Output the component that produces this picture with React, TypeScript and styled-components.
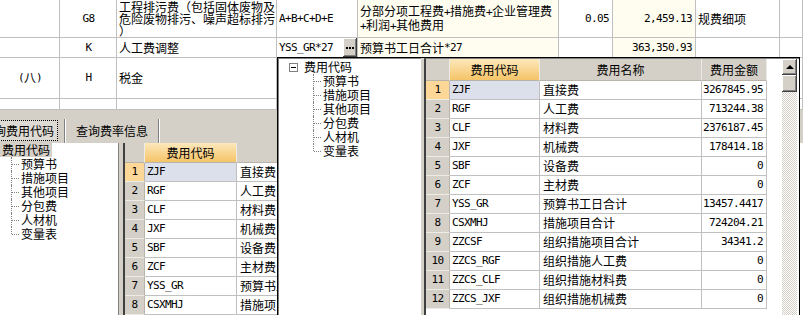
import React from "react";
import styled, { createGlobalStyle } from "styled-components";

const GRAY = "#D4D0C8";
const LINE = "#C0C0C0";
const CREAM = "#FFFDF0";
const CJK = `"Noto Sans CJK SC", "Noto Sans", sans-serif`;
const MONO = `"DejaVu Sans Mono", "Liberation Mono", monospace`;

const Global = createGlobalStyle`
  html, body { margin: 0; padding: 0; background: #fff; }
`;

const Screen = styled.div`
  position: relative;
  width: 803px;
  height: 315px;
  overflow: hidden;
  background: #fff;
  color: #000;
  font-family: ${CJK};
  font-size: 12px;
  line-height: 12px;
  display: flex;
  flex-direction: column;
`;

const Latin = styled.span`
  font-family: ${MONO};
  font-size: 11px;
  letter-spacing: -0.62px;
`;

function Txt({ s }: { s: string }) {
  const parts = s.match(/[\x00-\x7F]+|[^\x00-\x7F]+/g) || [];
  return (
    <>
      {parts.map((p, i) =>
        /^[\x00-\x7F]/.test(p) ? <Latin key={i}>{p}</Latin> : <React.Fragment key={i}>{p}</React.Fragment>
      )}
    </>
  );
}

/* ---------- main (background) table ---------- */

const MainTable = styled.div`
  flex: none;
  height: 110px;
  overflow: hidden;
  display: grid;
  grid-template-columns: 60px 57px 160px 81px 201px 54px 83px 84px 1fr;
  grid-template-rows: 38px 20px 41px 1fr;
`;

type Align = "left" | "center" | "right";

const Cell = styled.div<{ $align?: Align; $bg?: string }>`
  box-sizing: border-box;
  border-right: 1px solid ${LINE};
  border-bottom: 1px solid ${LINE};
  background: ${(p) => p.$bg || "#fff"};
  display: flex;
  align-items: center;
  justify-content: ${(p) =>
    p.$align === "center" ? "center" : p.$align === "right" ? "flex-end" : "flex-start"};
  padding: ${(p) => (p.$align === "right" ? "0 3px 0 2px" : "0 1px 0 2px")};
  overflow: hidden;
  white-space: nowrap;
`;

const EditCell = styled(Cell)`
  justify-content: space-between;
  padding-right: 0;
  align-items: stretch;
`;

const EditText = styled.span`
  display: flex;
  align-items: center;
`;

const Lines = styled.div`
  display: flex;
  flex-direction: column;
  line-height: 12px;
`;

const raised = `
  background: ${GRAY};
  box-shadow: inset -1px -1px #404040, inset 1px 1px #fff, inset -2px -2px #808080, inset 2px 2px ${GRAY};
`;

const EllipsisButton = styled.div`
  ${raised}
  width: 14px;
  display: flex;
  align-items: center;
  justify-content: center;
`;

/* ---------- lower panel ---------- */

const Lower = styled.div`
  flex: 1;
  min-height: 0;
  display: flex;
  flex-direction: column;
  background: ${GRAY};
`;

const TabBar = styled.div`
  flex: none;
  height: 33px;
  box-sizing: border-box;
  padding-top: 10px;
  display: flex;
  align-items: flex-start;
  margin-left: -22px;
`;

const Tab = styled.div<{ $active?: boolean }>`
  height: 21px;
  box-sizing: border-box;
  padding: 0 4px;
  display: flex;
  align-items: center;
  outline: ${(p) => (p.$active ? "1px dotted #000" : "none")};
  outline-offset: -1px;
  background: ${(p) => (p.$active ? "#DEDBD4" : "transparent")};
`;

const TabSep = styled.div`
  width: 0;
  height: 24px;
  margin: -1px 6px 0;
  border-left: 1px solid #808080;
  border-right: 1px solid #fff;
`;

const LowerBody = styled.div`
  flex: 1;
  min-height: 0;
  display: flex;
`;

const LowerTreePane = styled.div`
  width: 119px;
  flex: none;
  box-sizing: border-box;
  background: #fff;
  border-right: 1px solid #808080;
  overflow: hidden;
`;

const LowerGridPane = styled.div`
  margin-left: 4px;
  flex: 1;
  border-left: 2px solid #404040;
  background: #fff;
  overflow: hidden;
`;

/* ---------- tree ---------- */

const Tree = styled.div<{ $shift?: number }>`
  margin-left: ${(p) => -(p.$shift || 0)}px;
  white-space: nowrap;
`;

const RootRow = styled.div`
  height: 14px;
  display: flex;
  align-items: center;
  padding-left: 10px;
`;

const Expander = styled.div`
  position: relative;
  width: 9px;
  height: 9px;
  box-sizing: border-box;
  border: 1px solid #808080;
  background: #fff;
  &::after {
    content: "";
    position: absolute;
    left: 1px;
    top: 3px;
    width: 5px;
    height: 1px;
    background: #000;
  }
`;

const RootLabel = styled.span<{ $sel?: boolean }>`
  margin-left: 4px;
  padding: 1px 2px;
  background: ${(p) => (p.$sel ? GRAY : "transparent")};
`;

const Child = styled.div<{ $last?: boolean }>`
  position: relative;
  height: 14px;
  display: flex;
  align-items: center;
  padding-left: 44px;
  &::before {
    content: "";
    position: absolute;
    left: 34px;
    top: 0;
    height: ${(p) => (p.$last ? "7px" : "14px")};
    border-left: 1px dotted #808080;
  }
  &::after {
    content: "";
    position: absolute;
    left: 35px;
    top: 7px;
    width: 7px;
    border-top: 1px dotted #808080;
  }
`;

const treeChildren = ["预算书", "措施项目", "其他项目", "分包费", "人材机", "变量表"];

function CodeTree({ shift, selected }: { shift?: number; selected?: boolean }) {
  return (
    <Tree $shift={shift}>
      <RootRow>
        <Expander />
        <RootLabel $sel={selected}>费用代码</RootLabel>
      </RootRow>
      {treeChildren.map((c, i) => (
        <Child key={c} $last={i === treeChildren.length - 1}>
          {c}
        </Child>
      ))}
    </Tree>
  );
}

/* ---------- data grid ---------- */

const GridRow = styled.div<{ $cols: string; $h: number }>`
  display: grid;
  grid-template-columns: ${(p) => p.$cols};
  height: ${(p) => p.$h}px;
`;

const HeadCell = styled.div<{ $hot?: boolean }>`
  box-sizing: border-box;
  display: flex;
  align-items: center;
  justify-content: center;
  background: ${(p) => (p.$hot ? "linear-gradient(#FCE8BC, #F5C467)" : GRAY)};
  border-right: 1px solid #EDEBE6;
  border-bottom: 1px solid #B8B4AC;
  white-space: nowrap;
  overflow: hidden;
`;

const NumCell = styled.div<{ $hot?: boolean }>`
  box-sizing: border-box;
  display: flex;
  align-items: center;
  justify-content: center;
  background: ${(p) => (p.$hot ? "#FDD797" : GRAY)};
  border-right: 1px solid #B8B4AC;
  border-bottom: 1px solid #EDEBE6;
`;

const DataCell = styled.div<{ $right?: boolean; $sel?: boolean }>`
  box-sizing: border-box;
  display: flex;
  align-items: center;
  justify-content: ${(p) => (p.$right ? "flex-end" : "flex-start")};
  padding: ${(p) => (p.$right ? "0 3px 0 0" : "0 0 0 2px")};
  background: ${(p) => (p.$sel ? "#DCE0EB" : "#fff")};
  border-right: 1px solid ${LINE};
  border-bottom: 1px solid ${LINE};
  white-space: nowrap;
  overflow: hidden;
`;

const NameCell = styled(DataCell)`
  padding-left: 3px;
`;

const feeRows: [string, string, string][] = [
  ["ZJF", "直接费", "3267845.95"],
  ["RGF", "人工费", "713244.38"],
  ["CLF", "材料费", "2376187.45"],
  ["JXF", "机械费", "178414.18"],
  ["SBF", "设备费", "0"],
  ["ZCF", "主材费", "0"],
  ["YSS_GR", "预算书工日合计", "13457.4417"],
  ["CSXMHJ", "措施项目合计", "724204.21"],
  ["ZZCSF", "组织措施项目合计", "34341.2"],
  ["ZZCS_RGF", "组织措施人工费", "0"],
  ["ZZCS_CLF", "组织措施材料费", "0"],
  ["ZZCS_JXF", "组织措施机械费", "0"],
];

function FeeGrid({
  cols,
  headH,
  count,
  withAmount = true,
}: {
  cols: string;
  headH: number;
  count: number;
  withAmount?: boolean;
}) {
  return (
    <div>
      <GridRow $cols={cols} $h={headH}>
        <HeadCell />
        <HeadCell $hot>费用代码</HeadCell>
        <HeadCell>费用名称</HeadCell>
        {withAmount && <HeadCell>费用金额</HeadCell>}
      </GridRow>
      {feeRows.slice(0, count).map(([code, name, amt], i) => (
        <GridRow key={code} $cols={cols} $h={19}>
          <NumCell $hot={i === 0}>
            <Txt s={String(i + 1)} />
          </NumCell>
          <DataCell $sel={i === 0}>
            <Txt s={code} />
          </DataCell>
          <NameCell>{name}</NameCell>
          {withAmount && (
            <DataCell $right>
              <Txt s={amt} />
            </DataCell>
          )}
        </GridRow>
      ))}
    </div>
  );
}

/* ---------- popup ---------- */

const Popup = styled.div`
  position: absolute;
  left: 277px;
  top: 57px;
  width: 523px;
  height: 270px;
  box-sizing: border-box;
  border: 1px solid #000;
  background: ${GRAY};
  display: flex;
`;

const PopTreePane = styled.div`
  width: 143px;
  flex: none;
  box-sizing: border-box;
  border-left: 1px solid #808080;
  border-top: 1px solid #808080;
  background: #fff;
  padding-top: 1px;
`;

const PopGridPane = styled.div`
  margin-left: 3px;
  flex: 1;
  display: flex;
  background: #fff;
  border-left: 2px solid #404040;
  border-top: 1px solid #808080;
`;

const GridSlot = styled.div`
  width: 341px;
  flex: none;
`;

const Filler = styled.div`
  flex: 1;
`;

const ScrollBar = styled.div`
  width: 15px;
  margin-right: 2px;
  display: flex;
  flex-direction: column;
  background: repeating-conic-gradient(${GRAY} 0 25%, #fff 0 50%) 0 0 / 2px 2px;
`;

const ScrollBtn = styled.div<{ $h: number }>`
  ${raised}
  height: ${(p) => p.$h}px;
  flex: none;
  display: flex;
  align-items: center;
  justify-content: center;
`;

const UpArrow = styled.div`
  width: 0;
  height: 0;
  border-left: 4px solid transparent;
  border-right: 4px solid transparent;
  border-bottom: 4px solid #000;
  margin-top: -1px;
`;

export default function App() {
  return (
    <>
      <Global />
      <Screen>
        <MainTable>
          {/* row 1 */}
          <Cell />
          <Cell $align="center">
            <Txt s="G8" />
          </Cell>
          <Cell>
            <Lines>
              <span>工程排污费（包括固体废物及</span>
              <span>危险废物排污、噪声超标排污</span>
              <span>）</span>
            </Lines>
          </Cell>
          <Cell>
            <Txt s="A+B+C+D+E" />
          </Cell>
          <Cell $bg={CREAM}>
            <Lines>
              <span>
                <Txt s="分部分项工程费+措施费+企业管理费" />
              </span>
              <span>
                <Txt s="+利润+其他费用" />
              </span>
            </Lines>
          </Cell>
          <Cell $align="right">
            <Txt s="0.05" />
          </Cell>
          <Cell $align="right" $bg={CREAM}>
            <Txt s="2,459.13" />
          </Cell>
          <Cell>规费细项</Cell>
          <Cell />

          {/* row 2 */}
          <Cell />
          <Cell $align="center">
            <Txt s="K" />
          </Cell>
          <Cell>人工费调整</Cell>
          <EditCell>
            <EditText>
              <Txt s="YSS_GR*27" />
            </EditText>
            <EllipsisButton>
              <svg width="8" height="2" viewBox="0 0 8 2">
                <rect x="0" y="0" width="2" height="2" fill="#000" />
                <rect x="3" y="0" width="2" height="2" fill="#000" />
                <rect x="6" y="0" width="2" height="2" fill="#000" />
              </svg>
            </EllipsisButton>
          </EditCell>
          <Cell $bg={CREAM}>
            <Txt s="预算书工日合计*27" />
          </Cell>
          <Cell />
          <Cell $align="right" $bg={CREAM}>
            <Txt s="363,350.93" />
          </Cell>
          <Cell />
          <Cell />

          {/* row 3 */}
          <Cell $align="center">
            <Txt s="(" />八<Txt s=")" />
          </Cell>
          <Cell $align="center">
            <Txt s="H" />
          </Cell>
          <Cell>税金</Cell>
          <Cell />
          <Cell $bg={CREAM} />
          <Cell />
          <Cell $bg={CREAM} />
          <Cell />
          <Cell />

          {/* row 4 */}
          <Cell />
          <Cell />
          <Cell />
          <Cell />
          <Cell $bg={CREAM} />
          <Cell />
          <Cell $bg={CREAM} />
          <Cell />
          <Cell />
        </MainTable>

        <Lower>
          <TabBar>
            <Tab $active>查询费用代码</Tab>
            <TabSep />
            <Tab>查询费率信息</Tab>
            <TabSep />
          </TabBar>
          <LowerBody>
            <LowerTreePane>
              <CodeTree shift={23} selected />
            </LowerTreePane>
            <LowerGridPane>
              <FeeGrid cols="20px 92px 160px" headH={20} count={8} withAmount={false} />
            </LowerGridPane>
          </LowerBody>
        </Lower>

        <Popup>
          <PopTreePane>
            <CodeTree />
          </PopTreePane>
          <PopGridPane>
            <GridSlot>
              <FeeGrid cols="24px 90px 162px 65px" headH={22} count={12} />
            </GridSlot>
            <Filler />
            <ScrollBar>
              <ScrollBtn $h={16}>
                <UpArrow />
              </ScrollBtn>
              <ScrollBtn $h={17} />
            </ScrollBar>
          </PopGridPane>
        </Popup>
      </Screen>
    </>
  );
}
